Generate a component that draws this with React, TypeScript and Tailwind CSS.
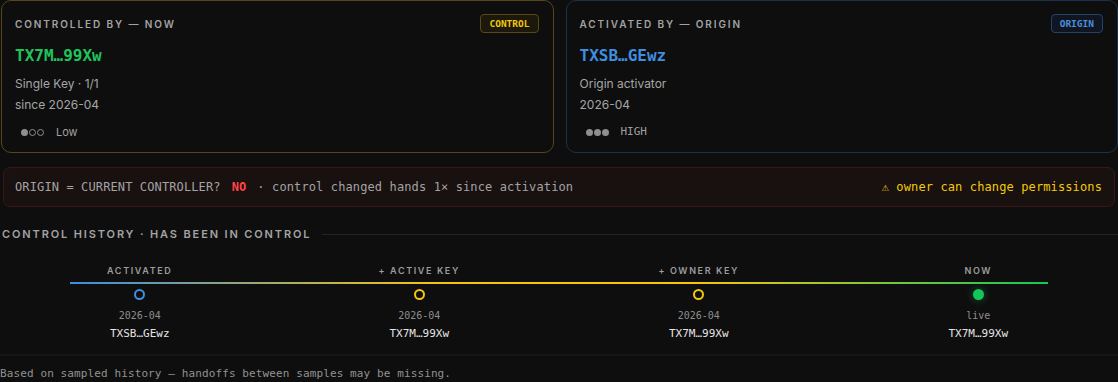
import type { ReactNode } from 'react'

const display = "font-['Inter',sans-serif]"
const mono = "font-['DejaVu_Sans_Mono','Liberation_Mono',monospace]"
const sans = "font-['Inter','Noto_Sans',sans-serif]"

function Dots({ filled }: { filled: number }) {
  return (
    <span className="ml-[6px] inline-flex items-center gap-px">
      {[0, 1, 2].map((i) =>
        i < filled ? (
          <span key={i} className="h-[7px] w-[7px] rounded-full bg-[#8f8f8f]" />
        ) : (
          <span key={i} className="h-[7px] w-[7px] rounded-full border border-[#8f8f8f]" />
        ),
      )}
    </span>
  )
}

function Card({
  border,
  label,
  badge,
  badgeClass,
  address,
  addressClass,
  lines,
  filled,
  level,
  levelClass,
}: {
  border: string
  label: string
  badge: string
  badgeClass: string
  address: string
  addressClass: string
  lines: string[]
  filled: number
  level: string
  levelClass: string
}) {
  return (
    <div className={`flex flex-col rounded-[10px] border bg-[#0e0e0e] pb-[12px] pl-[13px] pr-[14px] pt-[13px] ${border}`}>
      <div className="flex h-[19px] items-center justify-between">
        <span className={`${display} text-[10px] font-semibold uppercase leading-[14px] tracking-[0.19em] text-[#a3a3a3]`}>
          {label}
        </span>
        <span
          className={`${mono} flex h-[19px] items-center rounded-[4px] border px-[8px] text-[9.5px] font-bold leading-none ${badgeClass}`}
        >
          {badge}
        </span>
      </div>
      <div className={`${mono} mt-[13px] text-[16px] font-bold leading-[20px] ${addressClass}`}>{address}</div>
      <div className={`${sans} mt-[7px] text-[12px] text-[#a6a6a6]`}>
        <div className="leading-[21px]">{lines[0]}</div>
        <div className="leading-[22px]">{lines[1]}</div>
      </div>
      <div className="mt-[8px] flex h-[16px] items-center gap-[12px]">
        <Dots filled={filled} />
        <span className={`text-[11px] leading-[16px] text-[#a0a0a0] ${levelClass}`}>{level}</span>
      </div>
    </div>
  )
}

function Stop({ children, className = '' }: { children: ReactNode; className?: string }) {
  return <div className={`flex flex-col items-center ${className}`}>{children}</div>
}

const stops = [
  { label: 'ACTIVATED', date: '2026-04', addr: 'TXSB…GEwz', kind: 'blue' },
  { label: '+ ACTIVE KEY', date: '2026-04', addr: 'TX7M…99Xw', kind: 'ring-yellow' },
  { label: '+ OWNER KEY', date: '2026-04', addr: 'TX7M…99Xw', kind: 'ring-yellow' },
  { label: 'NOW', date: 'live', addr: 'TX7M…99Xw', kind: 'green' },
]

export default function App() {
  return (
    <div className="min-h-[382px] w-[1118px] overflow-hidden bg-[#0e0e0e]">
      <div className="grid grid-cols-2 gap-[12px] pl-px">
        <Card
          border="border-[#58461a]"
          label="Controlled by — now"
          badge="CONTROL"
          badgeClass="border-[#5a4817] bg-[#1c180c] text-[#f0c808]"
          address="TX7M…99Xw"
          addressClass="text-[#1fc45b]"
          lines={['Single Key · 1/1', 'since 2026-04']}
          filled={1}
          level="Low"
          levelClass={sans}
        />
        <Card
          border="border-[#1c324b]"
          label="Activated by — origin"
          badge="ORIGIN"
          badgeClass="border-[#22446a] bg-[#0f1621] text-[#4a8fd8]"
          address="TXSB…GEwz"
          addressClass="text-[#3f8ee0]"
          lines={['Origin activator', '2026-04']}
          filled={3}
          level="HIGH"
          levelClass={mono}
        />
      </div>

      <div
        className={`${mono} mx-[3px] mt-[14px] flex h-[40px] items-center justify-between rounded-[7px] border border-[#3a1717] bg-[#191010] pl-[11px] pr-[12px] text-[12px] tracking-[0.01em] text-[#a3a3a3]`}
      >
        <div className="flex items-center whitespace-pre">
          <span>ORIGIN = CURRENT CONTROLLER?</span>
          <span className="mx-[11px] font-bold text-[#ff4545]">NO</span>
          <span>· control changed hands 1× since activation</span>
        </div>
        <span className="text-[#f2cb05]">⚠ owner can change permissions</span>
      </div>

      <div className="mt-[20px] flex h-[14px] items-center gap-[11px] pl-[2px]">
        <span className={`${display} text-[11px] font-semibold uppercase leading-[14px] tracking-[0.17em] text-[#a3a3a3]`}>
          Control history · has been in control
        </span>
        <div className="h-px flex-1 bg-[#242424]" />
      </div>

      <div className="mt-[24px] grid grid-cols-4">
        {stops.map((s) => (
          <div
            key={s.label}
            className={`${display} text-center text-[9px] font-semibold leading-[12px] tracking-[0.18em] text-[#9c9c9c]`}
          >
            {s.label}
          </div>
        ))}
      </div>
      <div className="mx-[70px] mt-[5px] h-[2px] bg-[linear-gradient(90deg,#3d8ce2_0%,#f3c512_37%,#f7c70c_64%,#14c65a_100%)]" />
      <div className="mt-[5px] grid grid-cols-4">
        {stops.map((s) => (
          <Stop key={s.label}>
            {s.kind === 'blue' && <span className="h-[11px] w-[11px] rounded-full border-2 border-[#3f8fe2]" />}
            {s.kind === 'ring-yellow' && <span className="h-[11px] w-[11px] rounded-full border-2 border-[#f2c70c]" />}
            {s.kind === 'green' && (
              <span className="h-[11px] w-[11px] rounded-full bg-[#14c65a] shadow-[0_0_8px_rgba(20,198,90,0.45)]" />
            )}
            <span className={`${mono} mt-[9px] text-[10px] leading-[14px] text-[#8d8d8d]`}>{s.date}</span>
            <span className={`${mono} mt-[4px] text-[11px] font-medium leading-[14px] text-[#e4e4e4]`}>{s.addr}</span>
          </Stop>
        ))}
      </div>

      <div className="mt-[13px] border-t-2 border-[#161616] pt-[10px]">
        <p className={`${mono} text-[11px] leading-[16px] tracking-[0.01em] text-[#929292]`}>
          Based on sampled history — handoffs between samples may be missing.
        </p>
      </div>
    </div>
  )
}
